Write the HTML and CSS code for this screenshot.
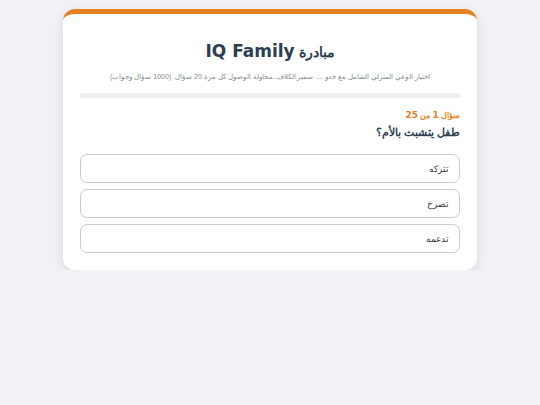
FILE: index.html
```html
<!DOCTYPE html>
<html dir="rtl">
<head>
    <meta charset="UTF-8">
    <meta name="viewport" content="width=device-width, initial-scale=1.0">
    <title>مبادرة IQ Family</title>
    <link rel="stylesheet" href="styles.css">
</head>
<body>

    <div class="container">
        <h1>مبادرة <span class="latin">IQ Family</span></h1>
        <p class="subtitle">اختبار الوعي المنزلي الشامل مع جدو .... سمير الكلاف..محاولة الوصول كل مرة 20 سؤال. (1000 سؤال وجواب)</p>

        <div class="progress">
            <div class="progress-fill" style="width: 0%"></div>
        </div>

        <div class="counter">سؤال <span class="latin">1</span> من <span class="latin">25</span></div>
        <h2 class="question">طفل يتشبث بالأم؟</h2>

        <div class="options">
            <button class="option">تتركه</button>
            <button class="option">تصرخ</button>
            <button class="option">تدعمه</button>
        </div>
    </div>

</body>
</html>
```

FILE: styles.css
```css
/* General Styles */
body {
    font-family: sans-serif;
    margin: 0;
    padding: 0;
    background-color: #f0f2f5;
    color: #2c3e50;
}

.latin {
    font-family: 'DejaVu Sans', sans-serif;
}

.container {
    width: 414px;
    margin: 9px auto 0;
    background-color: #fff;
    border-top: 5px solid #e67e22;
    border-radius: 12px;
    box-shadow: 0 4px 12px rgba(0, 0, 0, 0.1);
    padding: 27px 17px 17px;
    box-sizing: border-box;
}

h1 {
    text-align: center;
    font-size: 14px;
    line-height: 20px;
    margin: 0 0 9px;
    color: #2c3e50;
}

h1 .latin {
    font-size: 17px;
}

.subtitle {
    text-align: center;
    font-size: 7px;
    line-height: 12px;
    color: #7f8c8d;
    margin: 0 0 10px;
}

.progress {
    height: 5px;
    background-color: #eee;
    border-radius: 3px;
    margin-bottom: 11px;
}

.progress-fill {
    height: 100%;
    background-color: #e67e22;
    border-radius: 3px;
}

.counter {
    font-size: 8px;
    line-height: 12px;
    font-weight: bold;
    color: #e67e22;
    margin-bottom: 2px;
}

.counter .latin {
    font-size: 9px;
}

.question {
    font-size: 10.5px;
    line-height: 16px;
    margin: 0 0 14px;
    color: #2c3e50;
}

.options {
    display: flex;
    flex-direction: column;
    gap: 6px;
}

.option {
    font-family: sans-serif;
    height: 29px;
    padding: 0 10px;
    background-color: #fff;
    border: 1px solid #ccc;
    border-radius: 7px;
    text-align: right;
    font-size: 9px;
    color: #333;
    cursor: pointer;
}
```
